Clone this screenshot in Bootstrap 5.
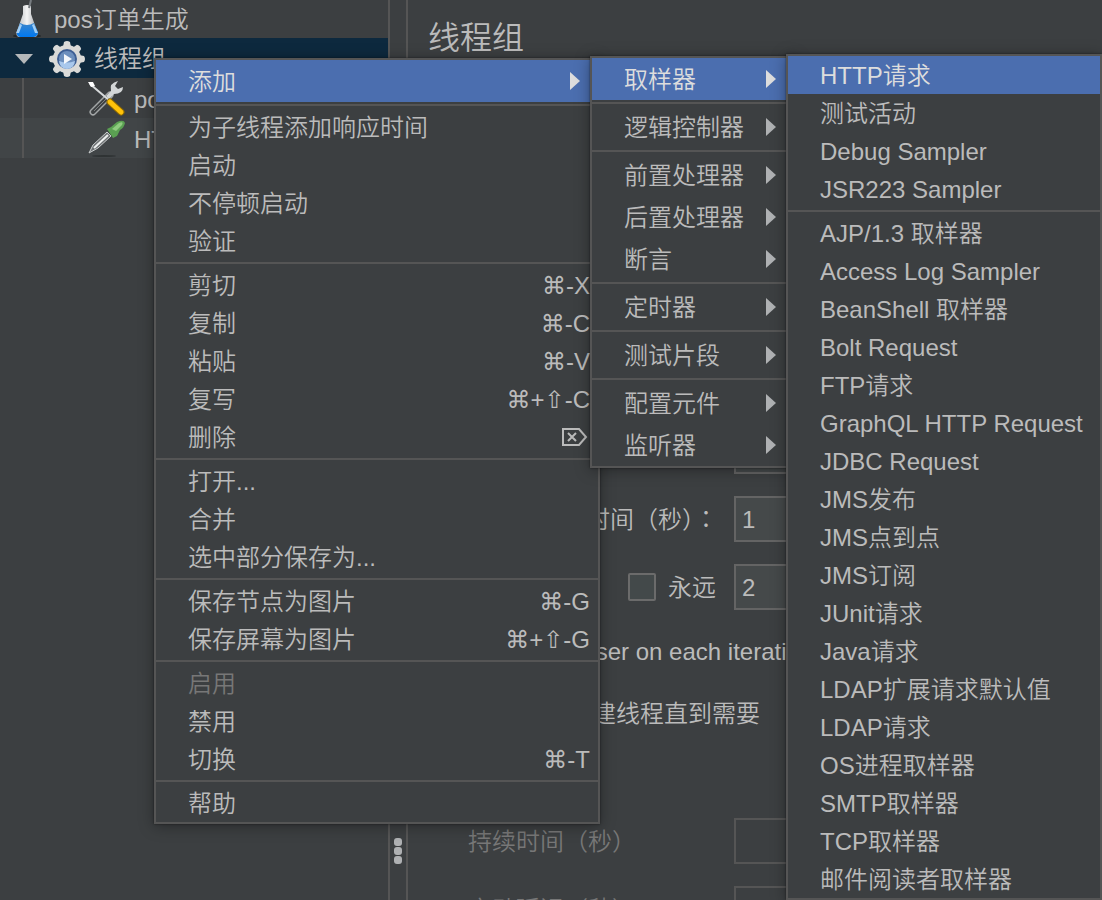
<!DOCTYPE html>
<html lang="zh-CN">
<head>
<meta charset="utf-8">
<meta name="viewport" content="width=device-width, initial-scale=1">
<title>线程组</title>
<link rel="stylesheet" href="https://cdn.jsdelivr.net/npm/bootstrap@5.3.0/dist/css/bootstrap.min.css">
<style>
  :root { --bg: #3c3f41; --line: #555555; --ink: #bbbbbb; --hot: #4b6eaf; }
  body { background: var(--bg); color: var(--ink); font: 350 24px/38px "Liberation Sans", "Noto Sans CJK SC", "DejaVu Sans", sans-serif; }

  /* tree */
  .tree-pane { width: 390px; border-right: 2px solid var(--line); }
  .tree-row { height: 40px; white-space: nowrap; }
  .tree-row.root-row { height: 38px; }
  .tree-row.chosen { background: #0d293e; }
  .tree-row.striped { background: #414547; }
  .tree-row svg { width: 40px; height: 40px; flex: none; }
  .tree-row.root-row svg { height: 38px; }
  .tree-row .twisty { width: 46px; }
  .tree-row span { padding-top: 2px; }
  .tree-row .guide + svg + span { padding-top: 4px; }
  .guide { width: 24px; border-right: 2px solid var(--line); margin-right: 62px; }
  .splitter { width: 18px; border-right: 2px solid var(--line); padding-bottom: 36px; gap: 1px; }
  .splitter i { width: 8px; height: 8px; border-radius: 3px; background: #afb1b3; }

  /* form */
  .form-pane { padding: 18px 20px; min-width: 0; white-space: nowrap; }
  .form-pane h1 { font-size: 32px; line-height: 40px; font-weight: 350; margin: 0 0 370px; }
  .fields { margin-left: 40px; font-family: "Liberation Sans", "Noto Sans CJK TC", sans-serif; font-feature-settings: "locl" 0; }
  .fields label { padding-top: 2px; }
  .field-row { height: 46px; margin-bottom: 22px; }
  .field-label { width: 266px; }
  .field-row .form-control, .field-row .form-control:disabled { flex: 1; height: 46px; border: 2px solid #646464; border-radius: 0; background: #45494a; color: var(--ink); font-size: 24px; line-height: 38px; padding: 2px 6px 0; }
  .field-row .form-control:disabled { background: var(--bg); border-color: var(--line); }
  .off { color: #777777; }
  .check-row { height: 38px; margin-bottom: 24px; padding-left: 5px; }
  .check-row.inset { padding-left: 12px; margin-bottom: 86px; }
  .tick { appearance: none; width: 28px; height: 28px; margin: 0 12px 0 0; border: 2px solid #6b6b6b; background: #43494a; border-radius: 2px; flex: none; }
  .loop-ever { width: 266px; padding-left: 160px; }

  /* popup menus */
  .popup { position: absolute; display: block; margin: 0; padding: 0; border: 2px solid var(--line); border-radius: 0; background: var(--bg); font-size: 24px; box-shadow: 0 2px 14px rgba(0,0,0,.35), 0 0 2px rgba(0,0,0,.5); min-width: 0; z-index: 10; }
  .popup .dropdown-item { display: flex; align-items: center; justify-content: space-between; height: 38px; padding: 2px 8px 0 32px; color: var(--ink); line-height: 36px; font-weight: 350; }
  .popup .dropdown-item.tall { height: 42px; padding-right: 18px; }
  .popup .dropdown-item.active { background: var(--hot); color: #dddddd; }
  .popup .dropdown-item:disabled { color: #777777; }
  .popup .dropdown-divider { margin: 2px 0; border-top: 2px solid var(--line); opacity: 1; }
  .popup .arrow { width: 10px; height: 18px; margin-bottom: 2px; fill: #afb1b3; }
  .popup .active .arrow { fill: #dddddd; }
  .popup kbd { background: none; color: inherit; padding: 0; font: 400 24px/36px "Liberation Sans", "DejaVu Sans", sans-serif; }
  .popup .delete-key { width: 26px; height: 20px; fill: none; stroke: currentColor; stroke-width: 2; margin-right: 2px; }
  .menu-main { left: 154px; top: 58px; width: 446px; }
  .menu-add { left: 590px; top: 56px; width: 206px; z-index: 11; }
  .menu-sampler { left: 786px; right: 0; top: 54px; z-index: 12; }
</style>
</head>
<body class="overflow-hidden">
<svg class="d-none">
  <symbol id="arrow" viewBox="0 0 10 18"><path d="M0 0 L10 9 L0 18Z"/></symbol>
</svg>

<main class="d-flex vh-100 overflow-hidden position-relative">
  <nav class="tree-pane flex-shrink-0 overflow-hidden" aria-label="测试计划">
    <div class="tree-row root-row d-flex align-items-center">
      <svg class="ms-2" viewBox="0 0 40 38" aria-hidden="true">
        <defs><linearGradient id="glass"><stop stop-color="#b0b4b8"/><stop offset=".5" stop-color="#f4f4f4"/><stop offset="1" stop-color="#9ea3a8"/></linearGradient>
        <linearGradient id="fluid" x2="0" y2="1"><stop stop-color="#3b86cc"/><stop offset="1" stop-color="#0078f0"/></linearGradient></defs>
        <ellipse cx="19" cy="36" rx="14" ry="2" fill="#25282a"/>
        <path d="M15 6 Q19 4 23 6 V14 L29 31 Q31 37 26 37 H12 Q7 37 9 31 L15 14Z" fill="url(#glass)"/>
        <path d="M12 23 Q19 27 26 23 L30 32 Q30 36 26 37 H12 Q8 36 9 32Z" fill="url(#fluid)"/>
        <path d="M12 24 L8 33 L11 33 L14 25Z M26 24 L30 33 L27 33 L24 25Z" fill="#a3cff5"/>
        <path d="M21 8 L23 0" stroke="#777c80" stroke-width="2"/>
      </svg>
      <span class="ms-1 px-0">&#8202;pos订单生成</span>
    </div>
    <div class="tree-row chosen d-flex align-items-center">
      <svg class="twisty" viewBox="0 0 46 40" aria-hidden="true"><path d="M15 16 H33 L24 26Z" fill="#b5b8ba"/></svg>
      <svg viewBox="0 0 40 40" aria-hidden="true">
        <g transform="translate(21 21)">
          <g fill="#dadad8"><circle r="14"/>
            <path id="tooth" d="M-4 -12 L-3 -17 Q0 -19 3 -17 L4 -12Z"/>
            <use href="#tooth" transform="rotate(45)"/><use href="#tooth" transform="rotate(90)"/><use href="#tooth" transform="rotate(135)"/><use href="#tooth" transform="rotate(180)"/><use href="#tooth" transform="rotate(225)"/><use href="#tooth" transform="rotate(270)"/><use href="#tooth" transform="rotate(315)"/>
          </g>
          <circle r="9" fill="#6d8fbd" stroke="#3e5f94" stroke-width="2"/>
          <path d="M-8 2 A8 8 0 0 0 8 2 Q0 5 -8 2Z" fill="#a9c8ec"/>
          <path d="M-3 -5 L5 0 L-3 5Z" fill="#f4f7fb"/>
        </g>
      </svg>
      <span class="ms-2">线程组</span>
    </div>
    <div class="tree-row d-flex align-items-center">
      <div class="guide align-self-stretch"></div>
      <svg viewBox="0 0 40 40" aria-hidden="true">
        <path d="M7 34 L24 17" stroke="#a3a6a7" stroke-width="7" stroke-linecap="round"/>
        <path d="M7 34 L24 17" stroke="#3f4244" stroke-width="4" stroke-linecap="round"/>
        <path d="M8 33 L22 19" stroke="#7d8081" stroke-width="1"/>
        <path d="M20 18 L25 13 Q23 5 32 3 L29 8 L32 11 L37 9 Q37 16 28 16 L23 21Z" fill="#d3d6d7"/>
        <path d="M4 6 L24 23" stroke="#d8dbdc" stroke-width="2"/><path d="M2 4 L7 4 L9 8 L5 9Z" fill="#ffffff"/>
        <path d="M24 24 L35 34" stroke="#8d6900" stroke-width="7" stroke-linecap="round"/>
        <path d="M24 24 L35 34" stroke="#ffc20a" stroke-width="5" stroke-linecap="round"/>
      </svg>
      <span class="ms-2">pos</span>
    </div>
    <div class="tree-row striped d-flex align-items-center">
      <div class="guide align-self-stretch"></div>
      <svg viewBox="0 0 40 40" aria-hidden="true">
        <ellipse cx="18" cy="38" rx="12" ry="1" fill="#2f3334"/>
        <path d="M3 35 L7 27 L21 14 L25 18 L12 30Z" fill="#6f7375" stroke="#c9cccd" stroke-width="1"/>
        <path d="M8 30 L22 17" stroke="#eef0f0" stroke-width="2"/>
        <path d="M21 11 L25 9 L31 4 Q38 1 39 5 Q38 10 34 12 L31 18 L27 20Z" fill="#5aa052"/>
        <path d="M26 11 L33 5 Q38 3 36 7 L30 13Z" fill="#8fcb80"/>
      </svg>
      <span class="ms-2">HT</span>
    </div>
  </nav>

  <div class="splitter flex-shrink-0 d-flex flex-column align-items-center justify-content-end" role="separator">
    <i></i><i></i><i></i>
  </div>

  <section class="form-pane flex-grow-1">
    <h1>线程组</h1>
    <form class="fields">
      <div class="field-row d-flex align-items-center">
        <label class="field-label" for="threads">线程数：</label>
        <input class="form-control" id="threads" type="text">
      </div>
      <div class="field-row d-flex align-items-center">
        <label class="field-label" for="ramp"><span class="d-flex justify-content-end pe-3">时间（秒）：</span></label>
        <input class="form-control" id="ramp" type="text" value="1">
      </div>
      <div class="field-row d-flex align-items-center">
        <span class="loop-ever d-flex align-items-center">
          <input class="tick" type="checkbox" id="forever"><label for="forever">永远</label>
        </span>
        <input class="form-control" id="loops" type="text" value="2" aria-label="循环次数">
      </div>
      <div class="check-row d-flex align-items-center">
        <input class="tick" type="checkbox" id="same"><label for="same">Same user on each iteration</label>
      </div>
      <div class="check-row inset d-flex align-items-center">
        <input class="tick" type="checkbox" id="delay"><label for="delay">延迟创建线程直到需要</label>
      </div>
      <div class="field-row d-flex align-items-center off">
        <label class="field-label" for="duration">持续时间（秒）</label>
        <input class="form-control" id="duration" type="text" disabled>
      </div>
      <div class="field-row d-flex align-items-center off">
        <label class="field-label" for="startup">启动延迟（秒）</label>
        <input class="form-control" id="startup" type="text" disabled>
      </div>
    </form>
  </section>

  <ul class="dropdown-menu popup menu-main show">
    <li><button type="button" class="dropdown-item tall active">添加<svg class="arrow"><use href="#arrow"/></svg></button></li>
    <li><hr class="dropdown-divider"></li>
    <li><button type="button" class="dropdown-item">为子线程添加响应时间</button></li>
    <li><button type="button" class="dropdown-item">启动</button></li>
    <li><button type="button" class="dropdown-item">不停顿启动</button></li>
    <li><button type="button" class="dropdown-item">验证</button></li>
    <li><hr class="dropdown-divider"></li>
    <li><button type="button" class="dropdown-item">剪切<kbd>⌘-X</kbd></button></li>
    <li><button type="button" class="dropdown-item">复制<kbd>⌘-C</kbd></button></li>
    <li><button type="button" class="dropdown-item">粘贴<kbd>⌘-V</kbd></button></li>
    <li><button type="button" class="dropdown-item">复写<kbd>⌘+⇧-C</kbd></button></li>
    <li><button type="button" class="dropdown-item">删除<svg class="delete-key" viewBox="0 0 26 20" role="img" aria-label="Delete"><path d="M1 1 H17 L24 9 L17 17 H1Z M6 5 L14 13 M14 5 L6 13"/></svg></button></li>
    <li><hr class="dropdown-divider"></li>
    <li><button type="button" class="dropdown-item">打开...</button></li>
    <li><button type="button" class="dropdown-item">合并</button></li>
    <li><button type="button" class="dropdown-item">选中部分保存为...</button></li>
    <li><hr class="dropdown-divider"></li>
    <li><button type="button" class="dropdown-item">保存节点为图片<kbd>⌘-G</kbd></button></li>
    <li><button type="button" class="dropdown-item">保存屏幕为图片<kbd>⌘+⇧-G</kbd></button></li>
    <li><hr class="dropdown-divider"></li>
    <li><button type="button" class="dropdown-item" disabled>启用</button></li>
    <li><button type="button" class="dropdown-item">禁用</button></li>
    <li><button type="button" class="dropdown-item">切换<kbd>⌘-T</kbd></button></li>
    <li><hr class="dropdown-divider"></li>
    <li><button type="button" class="dropdown-item">帮助</button></li>
  </ul>

  <ul class="dropdown-menu popup menu-add show">
    <li><button type="button" class="dropdown-item tall active">取样器<svg class="arrow"><use href="#arrow"/></svg></button></li>
    <li><hr class="dropdown-divider"></li>
    <li><button type="button" class="dropdown-item tall">逻辑控制器<svg class="arrow"><use href="#arrow"/></svg></button></li>
    <li><hr class="dropdown-divider"></li>
    <li><button type="button" class="dropdown-item tall">前置处理器<svg class="arrow"><use href="#arrow"/></svg></button></li>
    <li><button type="button" class="dropdown-item tall">后置处理器<svg class="arrow"><use href="#arrow"/></svg></button></li>
    <li><button type="button" class="dropdown-item tall">断言<svg class="arrow"><use href="#arrow"/></svg></button></li>
    <li><hr class="dropdown-divider"></li>
    <li><button type="button" class="dropdown-item tall">定时器<svg class="arrow"><use href="#arrow"/></svg></button></li>
    <li><hr class="dropdown-divider"></li>
    <li><button type="button" class="dropdown-item tall">测试片段<svg class="arrow"><use href="#arrow"/></svg></button></li>
    <li><hr class="dropdown-divider"></li>
    <li><button type="button" class="dropdown-item tall">配置元件<svg class="arrow"><use href="#arrow"/></svg></button></li>
    <li><button type="button" class="dropdown-item tall">监听器<svg class="arrow"><use href="#arrow"/></svg></button></li>
  </ul>

  <ul class="dropdown-menu popup menu-sampler show">
    <li><button type="button" class="dropdown-item active">HTTP请求</button></li>
    <li><button type="button" class="dropdown-item">测试活动</button></li>
    <li><button type="button" class="dropdown-item">Debug Sampler</button></li>
    <li><button type="button" class="dropdown-item">JSR223 Sampler</button></li>
    <li><hr class="dropdown-divider"></li>
    <li><button type="button" class="dropdown-item">AJP/1.3 取样器</button></li>
    <li><button type="button" class="dropdown-item">Access Log Sampler</button></li>
    <li><button type="button" class="dropdown-item">BeanShell 取样器</button></li>
    <li><button type="button" class="dropdown-item">Bolt Request</button></li>
    <li><button type="button" class="dropdown-item">FTP请求</button></li>
    <li><button type="button" class="dropdown-item">GraphQL HTTP Request</button></li>
    <li><button type="button" class="dropdown-item">JDBC Request</button></li>
    <li><button type="button" class="dropdown-item">JMS发布</button></li>
    <li><button type="button" class="dropdown-item">JMS点到点</button></li>
    <li><button type="button" class="dropdown-item">JMS订阅</button></li>
    <li><button type="button" class="dropdown-item">JUnit请求</button></li>
    <li><button type="button" class="dropdown-item">Java请求</button></li>
    <li><button type="button" class="dropdown-item">LDAP扩展请求默认值</button></li>
    <li><button type="button" class="dropdown-item">LDAP请求</button></li>
    <li><button type="button" class="dropdown-item">OS进程取样器</button></li>
    <li><button type="button" class="dropdown-item">SMTP取样器</button></li>
    <li><button type="button" class="dropdown-item">TCP取样器</button></li>
    <li><button type="button" class="dropdown-item">邮件阅读者取样器</button></li>
  </ul>
</main>
<script src="https://cdn.jsdelivr.net/npm/bootstrap@5.3.0/dist/js/bootstrap.bundle.min.js"></script>
</body>
</html>
